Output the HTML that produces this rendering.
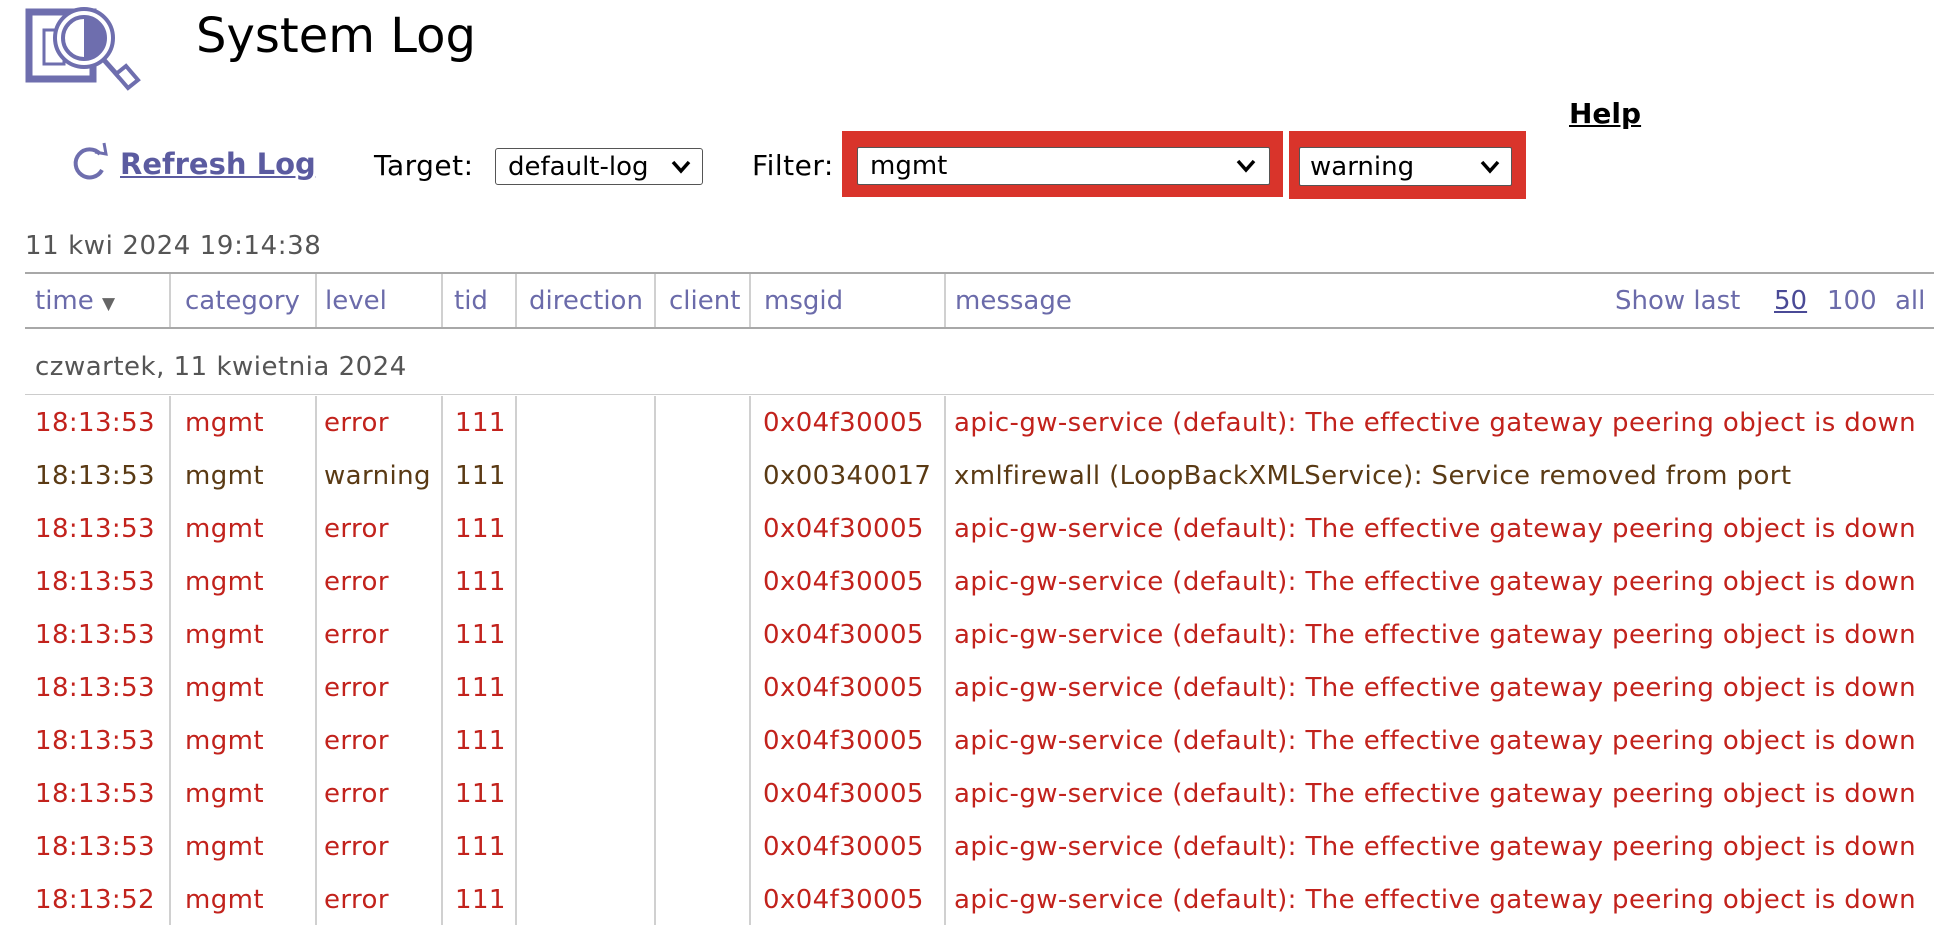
<!DOCTYPE html>
<html><head><meta charset="utf-8"><style>
body{margin:0;width:1934px;height:946px;background:#fff;position:relative;overflow:hidden;font-family:"DejaVu Sans",Verdana,sans-serif;}
.a{position:absolute;white-space:nowrap;line-height:1;}
.sel{position:absolute;border:1px solid #555;border-radius:3px;background:#fff;box-sizing:border-box;font-size:26px;}
.sel span{position:absolute;top:50%;transform:translateY(-50%);}
.chev{position:absolute;top:50%;transform:translateY(-50%);}
.red{position:absolute;background:#d9342b;}
.hl{position:absolute;left:25px;right:0;height:2px;background:#a8a8a8;}
.vl{position:absolute;width:2px;background:#d0d0d0;}
.h{color:#6b6baa;font-size:26px;}
.r{font-size:26px;letter-spacing:0.4px;}
.e{color:#c2221c;}
.w{color:#5a3a14;}
</style></head><body>
<svg class="a" style="left:20px;top:4px" width="130" height="92" viewBox="20 4 130 92">
<rect x="29" y="12" width="64" height="67" fill="none" stroke="#6e6eae" stroke-width="7"/>
<rect x="44" y="30" width="20" height="34" fill="none" stroke="#6e6eae" stroke-width="3"/>
<circle cx="84" cy="38" r="29" fill="#fff" stroke="#6e6eae" stroke-width="4"/>
<circle cx="84" cy="38" r="21" fill="#fff" stroke="#6e6eae" stroke-width="4"/>
<path d="M84 17 A21 21 0 0 1 84 59 Z" fill="#6e6eae"/>
<path d="M104 60 L120 78" stroke="#6e6eae" stroke-width="5"/>
<path d="M116 74 L126 66 L138 80 L128 88 Z" fill="#fff" stroke="#6e6eae" stroke-width="4"/>
</svg>
<div class="a" style="left:196px;top:12px;font-size:48px;color:#000">System Log</div>

<svg class="a" style="left:70px;top:140px" width="42" height="42" viewBox="0 0 42 42">
<path d="M30 14 A14 14 0 1 0 32 30" fill="none" stroke="#6e6eae" stroke-width="4"/>
<path d="M25 12 L36 14 L34 3" fill="none" stroke="#6e6eae" stroke-width="3"/>
</svg>
<div class="a" style="left:120px;top:150px;font-size:29px;font-weight:bold;color:#5b5ba0;text-decoration:underline">Refresh Log</div>
<div class="a" style="left:374px;top:152px;font-size:28px;color:#000;letter-spacing:0.5px">Target:</div>
<div class="sel" style="left:495px;top:148px;width:208px;height:37px"><span style="left:12px">default-log</span><svg class="chev" style="right:10px" width="22" height="16" viewBox="0 0 22 16"><path d="M3 3 L11 12 L19 3" fill="none" stroke="#000" stroke-width="3.5"/></svg></div>
<div class="a" style="left:752px;top:152px;font-size:28px;color:#000;letter-spacing:0.5px">Filter:</div>
<div class="red" style="left:842px;top:131px;width:441px;height:66px"></div>
<div class="red" style="left:1289px;top:131px;width:237px;height:68px"></div>
<div class="sel" style="left:857px;top:147px;width:413px;height:38px;border-radius:2px"><span style="left:12px">mgmt</span><svg class="chev" style="right:12px" width="22" height="16" viewBox="0 0 22 16"><path d="M3 3 L11 12 L19 3" fill="none" stroke="#000" stroke-width="3.5"/></svg></div>
<div class="sel" style="left:1299px;top:147px;width:213px;height:39px;border-radius:2px"><span style="left:10px">warning</span><svg class="chev" style="right:10px" width="22" height="16" viewBox="0 0 22 16"><path d="M3 3 L11 12 L19 3" fill="none" stroke="#000" stroke-width="3.5"/></svg></div>
<div class="a" style="left:1569px;top:100px;font-size:28px;font-weight:bold;color:#000;text-decoration:underline">Help</div>

<div class="a" style="left:25px;top:233px;font-size:26px;color:#555;letter-spacing:0.6px">11 kwi 2024 19:14:38</div>

<div class="hl" style="top:272px"></div>
<div class="hl" style="top:327px"></div>
<div class="hl" style="top:394px;height:1px;background:#ccc"></div>
<div class="vl" style="left:169px;top:274px;height:53px"></div>
<div class="vl" style="left:315px;top:274px;height:53px"></div>
<div class="vl" style="left:441px;top:274px;height:53px"></div>
<div class="vl" style="left:515px;top:274px;height:53px"></div>
<div class="vl" style="left:654px;top:274px;height:53px"></div>
<div class="vl" style="left:749px;top:274px;height:53px"></div>
<div class="vl" style="left:944px;top:274px;height:53px"></div>
<div class="vl" style="left:169px;top:396px;height:529px"></div>
<div class="vl" style="left:315px;top:396px;height:529px"></div>
<div class="vl" style="left:441px;top:396px;height:529px"></div>
<div class="vl" style="left:515px;top:396px;height:529px"></div>
<div class="vl" style="left:654px;top:396px;height:529px"></div>
<div class="vl" style="left:749px;top:396px;height:529px"></div>
<div class="vl" style="left:944px;top:396px;height:529px"></div>

<div class="a h" style="left:35px;top:288px">time <span style="font-size:17px;color:#666">▼</span></div>
<div class="a h" style="left:185px;top:288px">category</div>
<div class="a h" style="left:325px;top:288px">level</div>
<div class="a h" style="left:454px;top:288px">tid</div>
<div class="a h" style="left:529px;top:288px">direction</div>
<div class="a h" style="left:669px;top:288px">client</div>
<div class="a h" style="left:764px;top:288px">msgid</div>
<div class="a h" style="left:955px;top:288px">message</div>
<div class="a h" style="left:1615px;top:288px">Show last</div>
<div class="a h" style="left:1774px;top:288px;text-decoration:underline;color:#4a4a96">50</div>
<div class="a h" style="left:1827px;top:288px">100</div>
<div class="a h" style="left:1895px;top:288px">all</div>

<div class="a" style="left:35px;top:354px;font-size:26px;color:#555;letter-spacing:0.5px">czwartek, 11 kwietnia 2024</div>

<div class="a r e" style="left:35px;top:410px">18:13:53</div><div class="a r e" style="left:185px;top:410px">mgmt</div><div class="a r e" style="left:324px;top:410px">error</div><div class="a r e" style="left:455px;top:410px">111</div><div class="a r e" style="left:763px;top:410px">0x04f30005</div><div class="a r e" style="left:954px;top:410px">apic-gw-service (default): The effective gateway peering object is down</div>
<div class="a r w" style="left:35px;top:463px">18:13:53</div><div class="a r w" style="left:185px;top:463px">mgmt</div><div class="a r w" style="left:324px;top:463px">warning</div><div class="a r w" style="left:455px;top:463px">111</div><div class="a r w" style="left:763px;top:463px">0x00340017</div><div class="a r w" style="left:954px;top:463px">xmlfirewall (LoopBackXMLService): Service removed from port</div>
<div class="a r e" style="left:35px;top:516px">18:13:53</div><div class="a r e" style="left:185px;top:516px">mgmt</div><div class="a r e" style="left:324px;top:516px">error</div><div class="a r e" style="left:455px;top:516px">111</div><div class="a r e" style="left:763px;top:516px">0x04f30005</div><div class="a r e" style="left:954px;top:516px">apic-gw-service (default): The effective gateway peering object is down</div>
<div class="a r e" style="left:35px;top:569px">18:13:53</div><div class="a r e" style="left:185px;top:569px">mgmt</div><div class="a r e" style="left:324px;top:569px">error</div><div class="a r e" style="left:455px;top:569px">111</div><div class="a r e" style="left:763px;top:569px">0x04f30005</div><div class="a r e" style="left:954px;top:569px">apic-gw-service (default): The effective gateway peering object is down</div>
<div class="a r e" style="left:35px;top:622px">18:13:53</div><div class="a r e" style="left:185px;top:622px">mgmt</div><div class="a r e" style="left:324px;top:622px">error</div><div class="a r e" style="left:455px;top:622px">111</div><div class="a r e" style="left:763px;top:622px">0x04f30005</div><div class="a r e" style="left:954px;top:622px">apic-gw-service (default): The effective gateway peering object is down</div>
<div class="a r e" style="left:35px;top:675px">18:13:53</div><div class="a r e" style="left:185px;top:675px">mgmt</div><div class="a r e" style="left:324px;top:675px">error</div><div class="a r e" style="left:455px;top:675px">111</div><div class="a r e" style="left:763px;top:675px">0x04f30005</div><div class="a r e" style="left:954px;top:675px">apic-gw-service (default): The effective gateway peering object is down</div>
<div class="a r e" style="left:35px;top:728px">18:13:53</div><div class="a r e" style="left:185px;top:728px">mgmt</div><div class="a r e" style="left:324px;top:728px">error</div><div class="a r e" style="left:455px;top:728px">111</div><div class="a r e" style="left:763px;top:728px">0x04f30005</div><div class="a r e" style="left:954px;top:728px">apic-gw-service (default): The effective gateway peering object is down</div>
<div class="a r e" style="left:35px;top:781px">18:13:53</div><div class="a r e" style="left:185px;top:781px">mgmt</div><div class="a r e" style="left:324px;top:781px">error</div><div class="a r e" style="left:455px;top:781px">111</div><div class="a r e" style="left:763px;top:781px">0x04f30005</div><div class="a r e" style="left:954px;top:781px">apic-gw-service (default): The effective gateway peering object is down</div>
<div class="a r e" style="left:35px;top:834px">18:13:53</div><div class="a r e" style="left:185px;top:834px">mgmt</div><div class="a r e" style="left:324px;top:834px">error</div><div class="a r e" style="left:455px;top:834px">111</div><div class="a r e" style="left:763px;top:834px">0x04f30005</div><div class="a r e" style="left:954px;top:834px">apic-gw-service (default): The effective gateway peering object is down</div>
<div class="a r e" style="left:35px;top:887px">18:13:52</div><div class="a r e" style="left:185px;top:887px">mgmt</div><div class="a r e" style="left:324px;top:887px">error</div><div class="a r e" style="left:455px;top:887px">111</div><div class="a r e" style="left:763px;top:887px">0x04f30005</div><div class="a r e" style="left:954px;top:887px">apic-gw-service (default): The effective gateway peering object is down</div>
</body></html>
